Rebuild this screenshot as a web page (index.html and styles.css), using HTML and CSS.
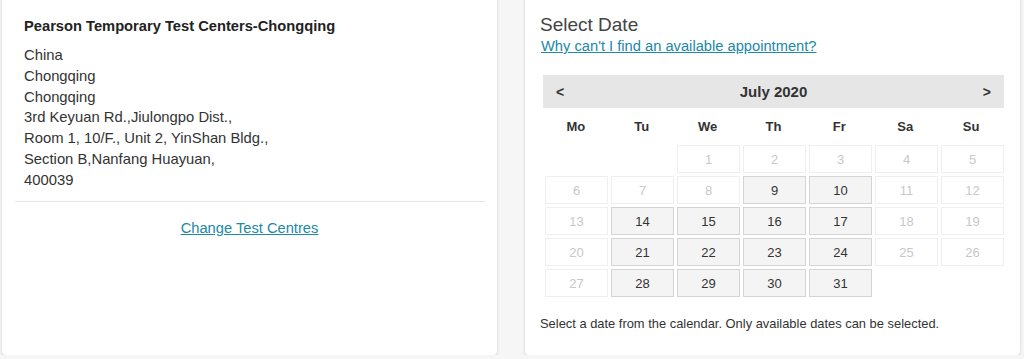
FILE: index.html
```html
<!DOCTYPE html>
<html lang="en">

<head>
    <meta charset="UTF-8">
    <meta name="viewport" content="width=device-width, initial-scale=1.0">
    <title>Select Date</title>
    <link rel="stylesheet" href="styles.css">
</head>

<body>
    <div class="page">
        <div class="card centre-card">
            <div class="centre-info">
                <h3 class="centre-name">Pearson Temporary Test Centers-Chongqing</h3>
                <p class="address">
                    China<br>
                    Chongqing<br>
                    Chongqing<br>
                    3rd Keyuan Rd.,Jiulongpo Dist.,<br>
                    Room 1, 10/F., Unit 2, YinShan Bldg.,<br>
                    Section B,Nanfang Huayuan,<br>
                    400039
                </p>
            </div>
            <hr class="divider">
            <div class="change-link">
                <a href="#">Change Test Centres</a>
            </div>
        </div>

        <div class="card date-card">
            <h2 class="title">Select Date</h2>
            <a href="#" class="help-link">Why can't I find an available appointment?</a>

            <div class="calendar">
                <div class="cal-header">
                    <span class="nav">&lt;</span>
                    <span class="month">July 2020</span>
                    <span class="nav">&gt;</span>
                </div>
                <div class="weekdays">
                    <span>Mo</span><span>Tu</span><span>We</span><span>Th</span><span>Fr</span><span>Sa</span><span>Su</span>
                </div>
                <div class="days">
                    <span class="day empty"></span>
                    <span class="day empty"></span>
                    <span class="day off">1</span>
                    <span class="day off">2</span>
                    <span class="day off">3</span>
                    <span class="day off">4</span>
                    <span class="day off">5</span>

                    <span class="day off">6</span>
                    <span class="day off">7</span>
                    <span class="day off">8</span>
                    <span class="day open">9</span>
                    <span class="day open">10</span>
                    <span class="day off">11</span>
                    <span class="day off">12</span>

                    <span class="day off">13</span>
                    <span class="day open">14</span>
                    <span class="day open">15</span>
                    <span class="day open">16</span>
                    <span class="day open">17</span>
                    <span class="day off">18</span>
                    <span class="day off">19</span>

                    <span class="day off">20</span>
                    <span class="day open">21</span>
                    <span class="day open">22</span>
                    <span class="day open">23</span>
                    <span class="day open">24</span>
                    <span class="day off">25</span>
                    <span class="day off">26</span>

                    <span class="day off">27</span>
                    <span class="day open">28</span>
                    <span class="day open">29</span>
                    <span class="day open">30</span>
                    <span class="day open">31</span>
                    <span class="day empty"></span>
                    <span class="day empty"></span>
                </div>
            </div>

            <p class="hint">Select a date from the calendar. Only available dates can be selected.</p>
        </div>
    </div>
</body>

</html>
```

FILE: styles.css
```css
body {
    margin: 0;
    padding: 0;
    font-family: "Liberation Sans", Arial, sans-serif;
    background-color: #f6f6f6;
    color: #333;
}

.page {
    display: flex;
    gap: 28px;
    padding: 0 4px 0 2px;
    margin-top: -10px;
}

.card {
    width: 495px;
    height: 365px;
    box-sizing: border-box;
    background-color: #fff;
    border-radius: 4px;
    box-shadow: 0 1px 3px rgba(0, 0, 0, 0.18);
}

a {
    color: #2089a8;
}

/* left card */
.centre-info {
    padding: 27px 22px 0 22px;
}

.centre-name {
    margin: 0;
    font-size: 14.7px;
    font-weight: bold;
    color: #222;
    line-height: 18px;
}

.address {
    margin: 10px 0 0 0;
    font-size: 14.8px;
    line-height: 20.8px;
    color: #333;
}

.divider {
    margin: 10px 12px 0 13px;
    border: none;
    border-top: 1px solid #e4e4e4;
}

.change-link {
    text-align: center;
    padding-top: 18px;
    font-size: 14.7px;
}

/* right card */
.date-card {
    padding: 22px 16px 0 15px;
}

.title {
    margin: 0;
    font-size: 19px;
    font-weight: normal;
    color: #444;
    line-height: 25px;
}

.help-link {
    display: inline-block;
    font-size: 14.7px;
    line-height: 19px;
    margin-left: 1px;
}

.calendar {
    margin: 19px 0 0 3px;
    width: 461px;
}

.cal-header {
    display: flex;
    justify-content: space-between;
    align-items: center;
    height: 33px;
    padding: 0 13px 0 13px;
    background-color: #e6e6e6;
    font-weight: bold;
    color: #333;
}

.cal-header .nav {
    font-size: 14px;
}

.cal-header .month {
    font-size: 15px;
}

.weekdays {
    display: grid;
    grid-template-columns: repeat(7, 1fr);
    height: 37px;
    align-items: center;
    font-size: 13px;
    font-weight: bold;
    color: #333;
    text-align: center;
}

.days {
    display: grid;
    grid-template-columns: repeat(7, 63px);
    grid-auto-rows: 28px;
    gap: 3px;
    padding-left: 2px;
}

.day {
    display: flex;
    align-items: center;
    justify-content: center;
    font-size: 13px;
    box-sizing: border-box;
}

.day.off {
    color: #c8c8c8;
    border: 1px solid #efefef;
}

.day.open {
    color: #333;
    background-color: #f4f4f4;
    border: 1px solid #d4d4d4;
}

.hint {
    margin: 19px 0 0 0;
    font-size: 12.9px;
    color: #333;
}
```
